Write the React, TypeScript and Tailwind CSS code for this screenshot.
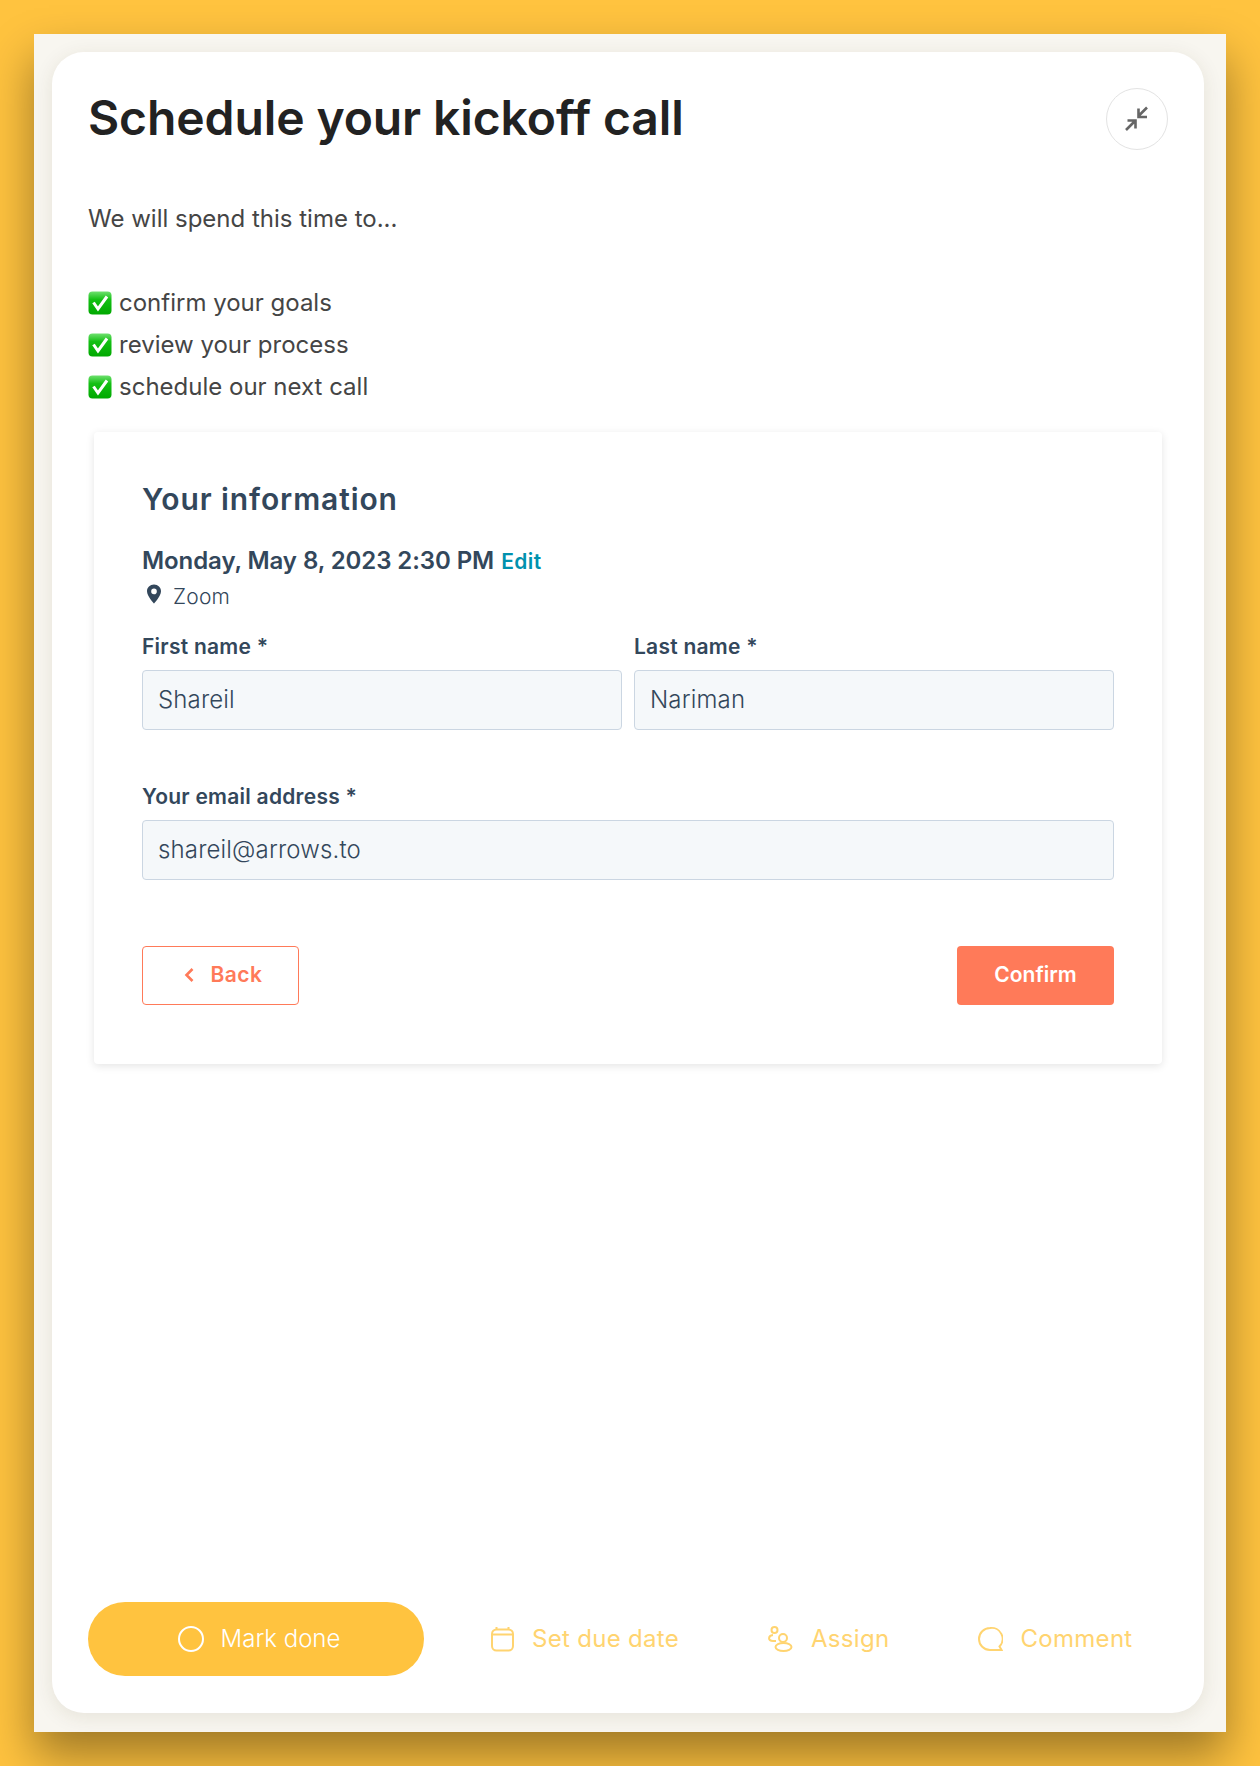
import React from "react";

const inter = "[font-family:Inter,sans-serif]";
const hub = "[font-family:Inter,sans-serif]";

function Check() {
  return (
    <svg width="24" height="24" viewBox="0 0 24 24" className="shrink-0">
      <defs>
        <linearGradient id="g" x1="0" y1="0" x2="0" y2="1">
          <stop offset="0" stopColor="#6fe06f" />
          <stop offset="0.35" stopColor="#14c014" />
          <stop offset="1" stopColor="#00a800" />
        </linearGradient>
      </defs>
      <rect x="0.5" y="0.5" width="23" height="23" rx="4" fill="url(#g)" />
      <path d="M5.5 11.5 L10 18 L19 5.5" fill="none" stroke="#fff" strokeWidth="3" strokeLinejoin="miter" />
    </svg>
  );
}

function Field({ label, value }: { label: string; value: string }) {
  return (
    <div className="flex flex-col">
      <label className={`${hub} text-[21px] leading-[24px] tracking-[0.25px] font-semibold text-[#33475b] mb-[11px]`}>{label}</label>
      <div className={`${hub} h-[60px] flex items-center px-[15px] bg-[#f5f8fa] border border-[#cbd6e2] rounded-[4px] text-[24px] tracking-[0.15px] font-light text-[#33475b]`}>
        {value}
      </div>
    </div>
  );
}

function Action({ icon, label, className }: { icon: React.ReactNode; label: string; className?: string }) {
  return (
    <div className={`flex items-center gap-[18px] text-[24px] tracking-[0.3px] text-[#ffd470] ${inter} ${className ?? ""}`}>
      {icon}
      <span>{label}</span>
    </div>
  );
}

export default function App() {
  return (
    <div className="min-h-[1766px] h-[1766px] overflow-hidden bg-[#ffc33f] pt-[34px] px-[34px]">
      <div className="h-[1698px] bg-[#f8f6f0] p-[18px] pb-[19px] pr-[22px] shadow-[0_24px_44px_rgba(0,0,0,0.38)]">
        <div className="h-full bg-white rounded-[32px] shadow-[0_4px_20px_rgba(70,55,20,0.1)] flex flex-col pt-[33px] px-[36px] pb-[37px]">
          <div className="flex items-start justify-between">
            <h1 className={`${inter} text-[48px] leading-[66px] font-semibold text-[#222222] tracking-[-0.1px] [font-feature-settings:'liga'_0,'calt'_0]`}>
              Schedule your kickoff call
            </h1>
            <div className="w-[62px] h-[62px] rounded-full border border-[#e3e3e3] flex items-center justify-center mt-[3px]">
              <svg width="26" height="26" viewBox="0 0 26 26" fill="none" stroke="#666666" strokeWidth="2.6">
                <path d="M23 1.5 L14.5 10 M14.5 2.5 V11 H23" />
                <path d="M2 24 L10.5 15.5 M3.5 14.5 H11.5 V22.5" />
              </svg>
            </div>
          </div>

          <div className={`${inter} text-[24px] leading-[42px] text-[#454545] mt-[47px]`}>
            <p>We will spend this time to...</p>
            <p className="h-[42px]" />
            {["confirm your goals", "review your process", "schedule our next call"].map((t) => (
              <p key={t} className="flex items-center gap-[7px]">
                <Check />
                {t}
              </p>
            ))}
          </div>

          <div className="mt-[24px] mx-[6px] h-[632px] bg-white rounded-[4px] shadow-[0_2px_9px_rgba(0,0,0,0.11)] px-[48px] pt-[49px]">
            <h2 className={`${hub} text-[30px] leading-[36px] tracking-[0.9px] font-semibold text-[#33475b]`}>Your information</h2>
            <div className={`${hub} mt-[28px] flex items-baseline gap-[7px] font-semibold text-[#33475b]`}>
              <span className="text-[24px] leading-[32px] tracking-[-0.08px]">Monday, May 8, 2023 2:30 PM</span>
              <span className="text-[21px] tracking-[0.4px] text-[#0091ae]">Edit</span>
            </div>
            <div className={`${hub} mt-[3px] flex items-center gap-[9px] text-[21px] tracking-[0.2px] font-light leading-[32px] text-[#33475b]`}>
              <svg width="20" height="20" viewBox="0 0 20 20" className="ml-[2px] mt-[-6px]" fill="#33475b">
                <path fillRule="evenodd" d="M10 0.5C6 0.5 3 3.5 3 7.2 3 12 10 19.5 10 19.5S17 12 17 7.2C17 3.5 14 0.5 10 0.5ZM10 4.6A2.8 2.8 0 1 1 10 10.2 2.8 2.8 0 0 1 10 4.6Z" />
              </svg>
              Zoom
            </div>
            <div className="mt-[22px] grid grid-cols-2 gap-x-[12px]">
              <Field label="First name *" value="Shareil" />
              <Field label="Last name *" value="Nariman" />
            </div>
            <div className="mt-[55px]">
              <Field label="Your email address *" value="shareil@arrows.to" />
            </div>
            <div className={`${hub} mt-[66px] flex justify-between text-[21px] font-semibold`}>
              <div className="w-[157px] h-[59px] pl-[6px] rounded-[4px] border border-[#ff7a59] text-[#ff7a59] flex items-center justify-center gap-[16px] tracking-[0.5px]">
                <svg width="10" height="16" viewBox="0 0 10 16" fill="none" stroke="#ff7a59" strokeWidth="2.6">
                  <path d="M8.5 2 L2.5 8 L8.5 14" />
                </svg>
                Back
              </div>
              <div className="w-[157px] h-[59px] rounded-[4px] bg-[#ff7a59] text-white flex items-center justify-center">Confirm</div>
            </div>
          </div>

          <div className="mt-auto flex items-center">
            <div className={`${inter} w-[336px] h-[74px] pl-[6px] rounded-full bg-[#ffc33f] text-white text-[24px] flex items-center justify-center gap-[17px] font-light`}>
              <span className="w-[26px] h-[26px] rounded-full border-[2px] border-white" />
              Mark done
            </div>
            <Action
              className="ml-[66px]"
              label="Set due date"
              icon={
                <svg width="24" height="26" viewBox="0 0 24 26" fill="none" stroke="#ffd470" strokeWidth="2">
                  <rect x="2" y="3.5" width="21" height="21" rx="4.5" />
                  <path d="M2 8.5 H23 M6.5 1 V3.5 M18.5 1 V3.5" />
                </svg>
              }
            />
            <Action
              className="ml-[88px]"
              label="Assign"
              icon={
                <svg width="26" height="26" viewBox="0 0 26 26" fill="none" stroke="#ffd470" strokeWidth="2">
                  <circle cx="7.5" cy="4" r="3" />
                  <path d="M6 9 C1 9.5 0.5 15 6 15 H9" />
                  <circle cx="16" cy="12" r="4" />
                  <ellipse cx="16.5" cy="21" rx="8" ry="4" />
                </svg>
              }
            />
            <Action
              className="ml-[88px]"
              label="Comment"
              icon={
                <svg width="26" height="26" viewBox="0 0 26 26" fill="none" stroke="#ffd470" strokeWidth="2" className="mr-[-1px]">
                  <path d="M13 2 A11 11 0 1 0 13 24 H24.5 L22.5 20.5 A11 11 0 0 0 13 2 Z" />
                </svg>
              }
            />
          </div>
        </div>
      </div>
    </div>
  );
}
